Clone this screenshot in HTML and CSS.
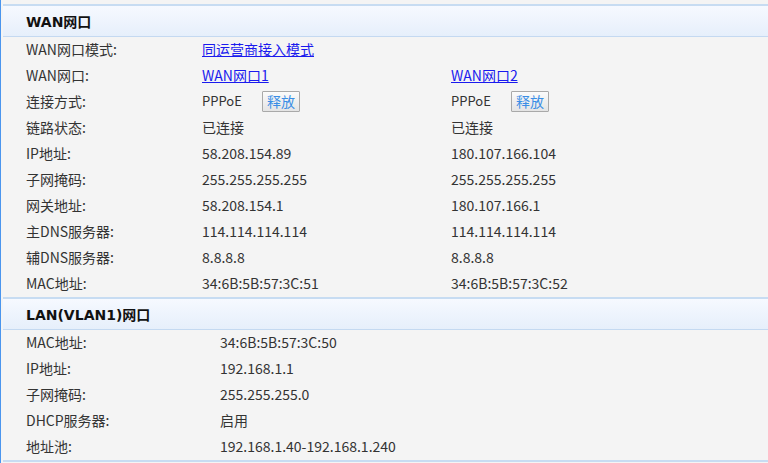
FILE: index.html
```html
<!DOCTYPE html>
<html>
<head>
<meta charset="utf-8">
<link rel="stylesheet" href="styles.css">
</head>
<body>
<div class="page">
  <section class="panel">
    <div class="panel-head"><h2>WAN网口</h2></div>
    <div class="rows wan">
      <div class="row"><span class="lbl">WAN网口模式:</span><span class="val"><a href="#">同运营商接入模式</a></span><span class="val"></span></div>
      <div class="row"><span class="lbl">WAN网口:</span><span class="val"><a href="#">WAN网口1</a></span><span class="val"><a href="#">WAN网口2</a></span></div>
      <div class="row"><span class="lbl">连接方式:</span><span class="val"><span class="proto">PPPoE</span><button class="btn">释放</button></span><span class="val"><span class="proto">PPPoE</span><button class="btn">释放</button></span></div>
      <div class="row"><span class="lbl">链路状态:</span><span class="val">已连接</span><span class="val">已连接</span></div>
      <div class="row"><span class="lbl">IP地址:</span><span class="val">58.208.154.89</span><span class="val">180.107.166.104</span></div>
      <div class="row"><span class="lbl">子网掩码:</span><span class="val">255.255.255.255</span><span class="val">255.255.255.255</span></div>
      <div class="row"><span class="lbl">网关地址:</span><span class="val">58.208.154.1</span><span class="val">180.107.166.1</span></div>
      <div class="row"><span class="lbl">主DNS服务器:</span><span class="val">114.114.114.114</span><span class="val">114.114.114.114</span></div>
      <div class="row"><span class="lbl">辅DNS服务器:</span><span class="val">8.8.8.8</span><span class="val">8.8.8.8</span></div>
      <div class="row"><span class="lbl">MAC地址:</span><span class="val">34:6B:5B:57:3C:51</span><span class="val">34:6B:5B:57:3C:52</span></div>
    </div>
  </section>
  <section class="panel">
    <div class="panel-head"><h2>LAN(VLAN1)网口</h2></div>
    <div class="rows lan">
      <div class="row"><span class="lbl">MAC地址:</span><span class="val">34:6B:5B:57:3C:50</span></div>
      <div class="row"><span class="lbl">IP地址:</span><span class="val">192.168.1.1</span></div>
      <div class="row"><span class="lbl">子网掩码:</span><span class="val">255.255.255.0</span></div>
      <div class="row"><span class="lbl">DHCP服务器:</span><span class="val">启用</span></div>
      <div class="row"><span class="lbl">地址池:</span><span class="val">192.168.1.40-192.168.1.240</span></div>
    </div>
  </section>
  <div class="next-head"></div>
</div>
</body>
</html>
```
FILE: styles.css
```css
html, body {
  margin: 0;
  padding: 0;
  background: #f4f4f4;
  height: 100%;
  overflow: hidden;
}
body {
  font-family: "Noto Sans CJK SC", "Noto Sans", sans-serif;
  font-size: 14px;
  color: #333;
}
.page {
  border-left: 1px solid #4a95ee;
  margin-left: 0;
  padding-left: 2px;
  padding-top: 4px;
  min-height: 100%;
  box-sizing: border-box;
}
.panel-head {
  height: 30px;
  border-top: 2px solid #c7dcf2;
  border-bottom: 1px solid #c4d9f1;
  background: linear-gradient(#f6f9ff, #e6effb);
  display: flex;
  align-items: center;
  padding-left: 23px;
}
.panel-head h2 {
  margin: 0;
  font-family: "DejaVu Sans", "Noto Sans CJK SC", sans-serif;
  font-size: 14px;
  font-weight: bold;
  color: #111;
}
.row {
  display: grid;
  box-sizing: border-box;
  height: 26px;
  padding-bottom: 2px;
  align-items: center;
  padding-left: 23px;
  line-height: 24px;
}
.wan .row {
  grid-template-columns: 176px 249px 1fr;
}
.lan .row {
  grid-template-columns: 194px 1fr;
}
.lbl, .val {
  white-space: nowrap;
  display: flex;
  align-items: center;
}
.val a {
  color: #1a1aee;
  text-decoration: underline;
}
.proto {
  display: inline-block;
  width: 60px;
  font-size: 13px;
}
.btn {
  width: 38px;
  height: 21px;
  padding: 0;
  border: 1px solid #a9a9a9;
  border-radius: 1px;
  background: linear-gradient(#fbfbfb, #e4e4e4);
  color: #3a8ee6;
  font-family: "Noto Sans CJK SC", sans-serif;
  font-size: 14px;
  line-height: 19px;
}
.next-head {
  border-top: 2px solid #c7dcf2;
  height: 4px;
}
```
